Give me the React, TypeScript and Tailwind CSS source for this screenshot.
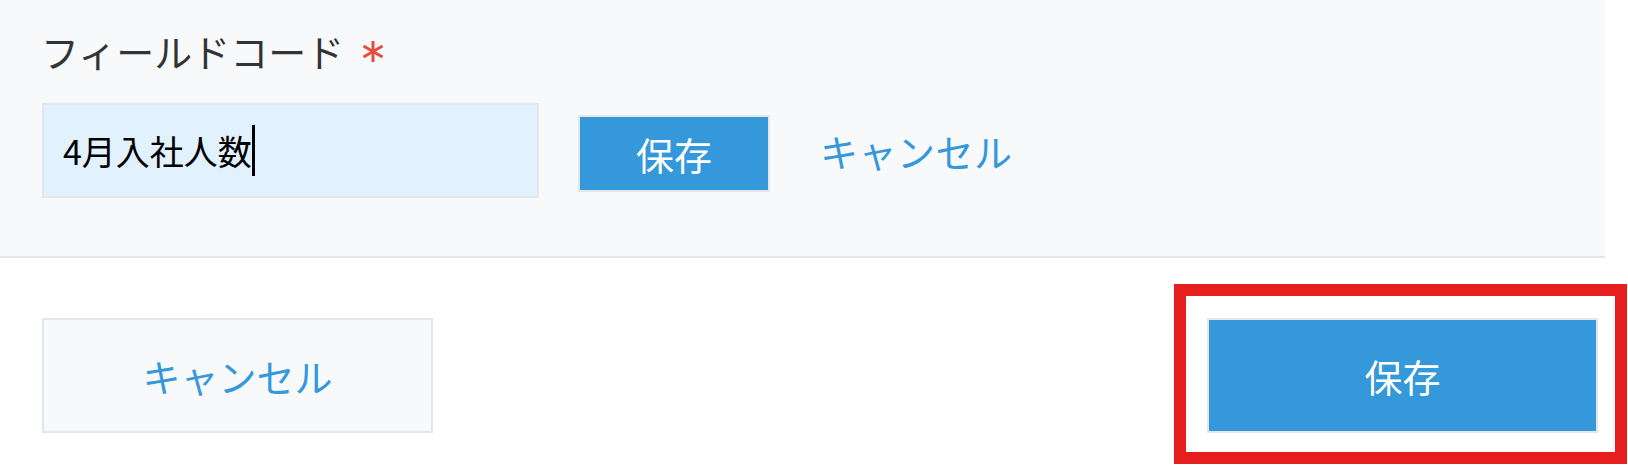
import React from "react";

export default function App() {
  const font = { fontFamily: '"Noto Sans CJK JP", "Noto Sans", sans-serif' };
  return (
    <div className="relative w-[1628px] h-[465px] bg-white overflow-hidden" style={font}>
      <div className="w-[1605px]">
        <div className="h-[258px] bg-[#f7f9fa] border-b-2 border-[#e3e6e8] pl-[41px] pt-[32px]">
          <div className="flex items-center h-[38px] text-[38px] leading-none text-[#333333]">
            <span>フィールドコード</span>
            <svg className="ml-[18px]" width="22" height="21" viewBox="0 0 22 21">
              <g stroke="#e74c3c" strokeWidth="3" strokeLinecap="butt">
                <line x1="11" y1="0" x2="11" y2="21" />
                <line x1="1.5" y1="5" x2="20.5" y2="16" />
                <line x1="1.5" y1="16" x2="20.5" y2="5" />
              </g>
            </svg>
          </div>
          <div className="flex items-center mt-[33px]">
            <div className="flex items-center ml-[1px] w-[497px] h-[95px] bg-[#e1f1fd] border-2 border-[#e3e7ea] pl-[19px]">
              <span className="text-[34px] leading-none text-black">4月入社人数</span>
              <span className="w-[3px] h-[51px] bg-black"></span>
            </div>
            <button className="ml-[39px] mt-[6px] w-[192px] h-[77px] bg-[#3498db] border-2 border-[#e3e7ea] text-white text-[38px] leading-none flex items-center justify-center">
              保存
            </button>
            <span className="ml-[50px] text-[38px] leading-none text-[#3498db] tracking-[0.5px]">キャンセル</span>
          </div>
        </div>
        <div className="flex justify-between items-start pt-[60px] pl-[42px] pr-[7px]">
          <button className="w-[391px] h-[115px] bg-[#f7f9fa] border-2 border-[#e3e7ea] text-[#3498db] text-[38px] leading-none flex items-center justify-center">
            キャンセル
          </button>
          <button className="w-[391px] h-[115px] bg-[#3498db] border-2 border-[#e3e7ea] text-white text-[38px] leading-none flex items-center justify-center">
            保存
          </button>
        </div>
      </div>
      <div className="absolute left-[1174px] top-[284px] w-[453px] h-[180px] border-[12px] border-[#e61e1e]"></div>
    </div>
  );
}
